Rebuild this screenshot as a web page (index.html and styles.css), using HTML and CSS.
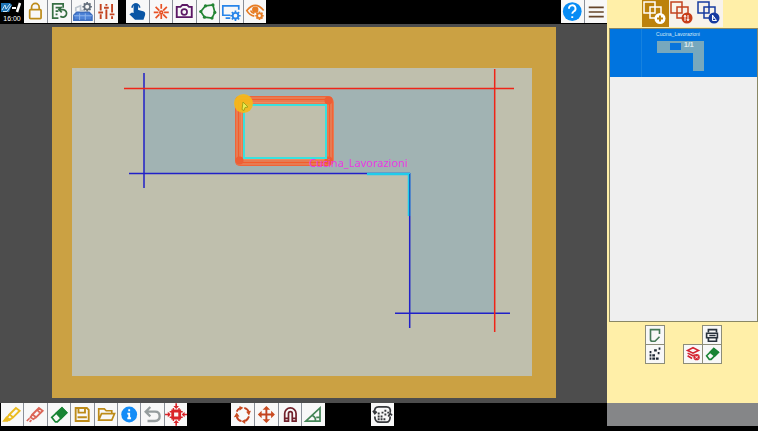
FILE: index.html
```html
<!DOCTYPE html>
<html lang="it">
<head>
<meta charset="utf-8">
<title>Cucina_Lavorazioni</title>
<link rel="stylesheet" href="styles.css">
</head>
<body>
<main class="workspace">
  <header class="toolbar toolbar-top">
    <div class="brand">
      <svg class="brand-logo" viewBox="0 0 22 11" aria-hidden="true"><path d="M1 1h9l2 2-3 7H1z" fill="#1f74b5"/><path d="M2 8 5 3l1 4 4-5M3 9.500h4l4-6" fill="none" stroke="#c6e2f4"/><path d="M12 6h4" stroke="#fff" stroke-width="2"/><path d="m17 10 3-9" stroke="#fff" stroke-width="2.500"/></svg>
      <time class="clock">16:00</time>
    </div>
    <div class="group cols-4">
      <button class="tool gold" aria-label="Lock"><svg viewBox="0 0 24 24"><rect x="6" y="10" width="12" height="9.500" rx="1"/><path d="M8 10V7.500a4 4 0 0 1 8 0V10"/></svg></button>
      <button class="tool green-dark" aria-label="Reload list"><svg viewBox="0 0 24 24"><path d="M11 19H5V4h11v4M8 8h5M8 11.500h3M8 15h2M12 10h4a4 4 0 1 1-3 7M14.500 7l-3 3 3 3"/></svg></button>
      <button class="tool" aria-label="Machine settings"><svg viewBox="0 0 24 24"><path d="m2 16 3-3h13l3 3v5H2z" fill="#4e83d8" stroke="#3e6fc0"/><path d="M2 16.500h19M8 14v7M14 14v7" stroke="#91b7ed" stroke-width="1"/><path d="M4 12V8l5-2v5h4" stroke="#bec6cf"/><circle cx="16" cy="7" r="3" stroke="#66717e"/><path d="M16 2v2m0 6v2M11 7h2m6 0h2M12.500 3.500l1.500 1.500m4 4 1.500 1.500m0-7L18 5m-4 4-1.500 1.500" stroke="#66717e"/></svg></button>
      <button class="tool rust" aria-label="Adjust"><svg viewBox="0 0 24 24"><path d="M6 4v7m0 4v5M12 4v2m0 4v10M18 4v9m0 4v3M3.500 13h5M9.500 8h5M15.500 15h5" stroke-width="2"/></svg></button>
    </div>
    <div class="group cols-6 after-brand">
      <button class="tool" aria-label="Select"><svg viewBox="0 0 24 24"><path d="M9 15V5.500a1.500 1.500 0 0 1 3 0V11l6 1.500q2 .5 1.500 3L18 20h-8l-5-5 1.500-1z" fill="#0a56a5" stroke="#0a56a5"/><path d="M6.500 8a4 4 0 1 1 8 0" stroke="#0a56a5"/></svg></button>
      <button class="tool orange-red" aria-label="Laser origin"><svg viewBox="0 0 24 24"><path d="M12 4v5m0 6v5M4 13h5m6 0h5M6 7l4 4m4 4 4 4m0-12-4 4m-4 4-4 4"/><circle cx="12" cy="13" r="1.500"/></svg></button>
      <button class="tool purple" aria-label="Camera"><svg viewBox="0 0 24 24"><path d="M4 7h4l2-2h5l2 2h3v11H4z" stroke-width="2"/><circle cx="12" cy="12.500" r="3"/></svg></button>
      <button class="tool green" aria-label="Polygon"><svg viewBox="0 0 24 24"><path d="m9 6 8-1 2 8-3 6-8-1-4-6z"/><g fill="#238533" stroke="none"><circle cx="9" cy="6" r="1.700"/><circle cx="17" cy="5" r="1.700"/><circle cx="19" cy="13" r="1.700"/><circle cx="16" cy="19" r="1.700"/><circle cx="8" cy="18" r="1.700"/><circle cx="4" cy="12" r="1.700"/></g></svg></button>
      <button class="tool blue" aria-label="Screen settings"><svg viewBox="0 0 24 24"><path d="M11 16H3V6h17v4M6 19h5"/><circle cx="16.500" cy="16.500" r="3" stroke-width="2"/><path d="M16.500 11v2m0 7v2M11 16.500h2m7 0h2M12.600 12.600l1.400 1.400m5 5 1.400 1.400m0-7.800L19 14m-5 5-1.400 1.400"/></svg></button>
      <button class="tool orange" aria-label="View settings"><svg viewBox="0 0 24 24"><path d="M11 17q-5-1-8-6 9-11 18 0M7 11a5 4.500 0 0 0 4 3"/><circle cx="12" cy="10" r="2.500" fill="#e77d25"/><circle cx="16.500" cy="16.500" r="2.500" stroke-width="2"/><path d="M16.500 12v2m0 5v2M12 16.500h2m5 0h2M13.300 13.300l1.200 1.200m4 4 1.200 1.200m0-6.400-1.200 1.200m-4 4-1.200 1.200"/></svg></button>
    </div>
    <div class="group cols-2 push">
      <button class="tool" aria-label="Help"><svg viewBox="0 0 24 24"><circle cx="12" cy="12" r="10" fill="#078cf5" stroke="none"/><path d="M8.500 9a3.500 3.500 0 1 1 5 3q-1.500 1-1.500 2.500M12 17v2" stroke="#fff" stroke-width="2"/></svg></button>
      <button class="tool" aria-label="Menu"><svg viewBox="0 0 24 24"><path d="M4 7.500h16M4 12.500h16M4 17.500h16" stroke="#65452a"/></svg></button>
    </div>
  </header>

  <svg class="canvas" viewBox="0 24 607 379" role="img" aria-label="Cucina_Lavorazioni">
    <rect x="52" y="27" width="504" height="371" fill="#cba143"/>
    <rect x="72" y="68" width="460" height="308" fill="#bfbfad"/>
    <path d="M144 88.500h351V313h-85V173.500H144z" fill="#a1b3b3"/>
    <rect x="240" y="101" width="89" height="60" fill="#c0bfac"/>
    <g fill="none">
      <rect x="239.500" y="100.500" width="90" height="61" rx="2" stroke="#e77b52" stroke-width="9"/>
      <rect x="235.500" y="96.500" width="97" height="69" rx="4" stroke="#f26337"/>
      <rect x="238.500" y="99.500" width="91" height="63" rx="2" stroke="#f45c2b"/>
      <rect x="241.500" y="102.500" width="85" height="57" stroke="#ef8860"/>
      <g fill="#ed5e35"><circle cx="328.500" cy="100.500" r="4"/><circle cx="328.500" cy="160.500" r="4"/><circle cx="239.500" cy="160.500" r="4"/></g>
      <rect x="244" y="105" width="82" height="53" stroke="#39e1df" stroke-width="2"/>
      <g stroke="#2020c8" stroke-width="1.500"><path d="M144 73v115M129 173.500h281M409.700 173v155M395 313.300h115"/></g>
      <path d="M367 174h42v42" stroke="#20ccec" stroke-width="2.500"/>
      <path d="M409.500 174v42" stroke="#1265bc"/>
      <path d="M124 88.500h390M494.700 69v263" stroke="#ef2418" stroke-width="1.500"/>
    </g>
    <circle cx="243.500" cy="103.500" r="9.500" fill="#f5ba19" fill-opacity=".92"/>
    <path d="m243 102 5 5-3 .5-1 3-2-1z" fill="#e7ef55" stroke="#a6a316"/>
    <text class="piece-name" x="309" y="167">Cucina_Lavorazioni</text>
  </svg>

  <footer class="toolbar toolbar-bottom">
    <div class="group cols-8">
      <button class="tool yellow" aria-label="Highlight"><svg viewBox="0 0 24 24"><path d="m9 12 7-7 4 3-7 7zM9 12l-3 4 3 2 4-3" stroke-width="2"/><path d="m6 15-3 4h4l2-2z" fill="#ebbb20"/></svg></button>
      <button class="tool coral" aria-label="Mark"><svg viewBox="0 0 24 24"><path d="m9 12 7-7 4 3-7 7zM9 12l-2 3 3 2 3-2" stroke-width="2"/><path d="m6 16-3 3m5-1-2 2M14 7l3 3"/></svg></button>
      <button class="tool eraser" aria-label="Erase"><svg viewBox="0 0 24 24"><path d="m4 15 11-10 5 5-10 10H8z"/><path d="m9 10.500 6-5.500 5 5-6 6z" fill="#198434"/></svg></button>
      <button class="tool gold" aria-label="Save"><svg viewBox="0 0 24 24"><path d="M5 5h12l2 2v12H5zM8 5v5h7V5M7 15h10" stroke-width="2"/></svg></button>
      <button class="tool gold" aria-label="Open"><svg viewBox="0 0 24 24"><path d="M4 18V6h6l2 2h6v3M4 18l3-7h14l-3 7z"/></svg></button>
      <button class="tool" aria-label="Information"><svg viewBox="0 0 24 24"><circle cx="12" cy="12" r="8.500" fill="#138cf7" stroke="none"/><path d="M12 6.500v2M10 11h2v5m-2 0h4" stroke="#fff" stroke-width="2"/></svg></button>
      <button class="tool" aria-label="Undo"><svg viewBox="0 0 24 24"><path d="M5 9h10q5 0 5 5t-5 5H7M10 4 5 9l5 5" stroke="#969d9e" stroke-width="2.500"/></svg></button>
      <button class="tool red" aria-label="Fit"><svg viewBox="0 0 24 24"><path d="M7.500 7.500h9v9h-9zM9 5v14m6-14v14M5 9h14M5 15h14" stroke-width="1.500"/><path d="m12 6-3-3h6zM12 18l-3 3h6zM6 12 3 9v6zM18 12l3-3v6z" fill="#da252a" stroke="none"/><path d="M12 0v5m0 14v5M0 12h5m14 0h5"/></svg></button>
    </div>
    <div class="group cols-4 transform-tools">
      <button class="tool rust" aria-label="Rotate"><svg viewBox="0 0 24 24"><path d="M6 9q1-3 4-4m4 0q4 1 5 5m0 4q-1 3-4 5m-4 0q-4-1-5-5" stroke-width="2"/><path d="m9 3 4 2-4 3zM21 8l-2 5-3-4zM15 22l-4-3 4-2zM3 15l3-5 3 4z" fill="#c94b20" stroke="none"/></svg></button>
      <button class="tool rust" aria-label="Move"><svg viewBox="0 0 24 24"><path d="M12 5v14M5 12h14" stroke-width="2"/><path d="m12 3-4 4h8zM12 21l-4-4h8zM3 12l4-4v8zM21 12l-4-4v8z" fill="#c94b20" stroke="none"/></svg></button>
      <button class="tool maroon" aria-label="Snap"><svg viewBox="0 0 24 24"><path d="M6 19v-8a6 6 0 0 1 12 0v8h-4v-8q0-2-2-2t-2 2v8zM6 16h4m4 0h4"/></svg></button>
      <button class="tool green-soft" aria-label="Angle"><svg viewBox="0 0 24 24"><path d="M4 19 19 5v14zM11 13q4 2 3 6m1-4h4"/></svg></button>
    </div>
    <div class="group cols-1 nesting">
      <button class="tool slate" aria-label="Nesting"><svg viewBox="0 0 24 24"><path d="M4 10q-1-6 4-6h8q5 0 4 6M4 14q0 6 5 6h7q4 0 4-6M2 8l2 3 2-2m12 5 2-3 2 2"/><path d="M7 11h2M7 14h2m1 0h2M7 17h2m1 0h2m1 0h2M11 10h2m1-2h2m-2 4h2m1-2h2" stroke-width="2"/></svg></button>
    </div>
  </footer>
</main>

<aside class="side">
  <nav class="modes">
    <button class="mode active" aria-label="Add piece"><svg viewBox="0 0 27 27"><path d="M2 2h11v11H2zM8 7h11v11H8z"/><circle cx="18" cy="18.500" r="5.500" fill="#fff" stroke="none"/><path d="M18 15.500v6M15 18.500h6" stroke="#bc820c" stroke-width="2"/></svg></button>
    <button class="mode rust" aria-label="Sort pieces"><svg viewBox="0 0 27 27"><path d="M2 2h11v11H2zM8 7h11v11H8z"/><circle cx="18" cy="18" r="5.500" fill="#c83d18" stroke="none"/><path d="M16 21v-5m-1 1 1-2 1 2m2-2v5m-1-1 1 2 1-2" stroke="#fff" stroke-width="1"/></svg></button>
    <button class="mode navy" aria-label="Measure pieces"><svg viewBox="0 0 27 27"><path d="M2 2h11v11H2zM8 7h11v11H8z"/><circle cx="18" cy="18" r="5.500" fill="#173ba0" stroke="none"/><path d="M16.500 15v5.500h4zM17 18h2" stroke="#fff" stroke-width="1"/></svg></button>
  </nav>
  <section class="pieces">
    <button class="piece">
      <span class="piece-mark"></span>
      <span class="piece-view">
        <span class="piece-title">Cucina_Lavorazioni</span>
        <svg class="piece-shape" viewBox="0 0 47 30"><path d="M0 0h47v30H36V12H0z" fill="#77a8bd"/><rect x="13" y="2" width="11" height="7" fill="#0874dc"/><text class="piece-count" x="27" y="6">1/1</text></svg>
      </span>
    </button>
  </section>
  <div class="actions">
    <div class="action-stack">
      <button class="action" aria-label="Edit sheet"><svg viewBox="0 0 20 20"><path d="M15 9V4H5v11q0 2 2 2h3l5-5" stroke="#467957"/></svg></button>
      <button class="action" aria-label="Arrange"><svg viewBox="0 0 20 20"><path d="M4 8h2M4 11.500h2m1 0h3M4 15h2m1 0h3m1 0h3M9 6h3m2-2h2m-3 5h2" stroke="#1e2835" stroke-width="2.500"/></svg></button>
    </div>
    <div class="action-stack right">
      <button class="action print" aria-label="Print"><svg viewBox="0 0 20 20"><path d="M6 7V4h9v3M4 8h12v5H4zM6 13v4h9v-4M7 10.500h7" stroke="#29323d"/></svg></button>
      <button class="action" aria-label="Remove layers"><svg viewBox="0 0 20 20"><path d="m4 6 6-3 6 3-6 3zM4 9l6 3 2-1M4 12l5 3" stroke="#d32531"/><circle cx="14" cy="13.500" r="3.500" fill="#d32531" stroke="none"/><path d="m12.500 12 3 3m0-3-3 3" stroke="#fff" stroke-width="1"/></svg></button>
      <button class="action eraser" aria-label="Erase piece"><svg viewBox="0 0 20 20"><path d="m4 12 8-8 5 4-8 8H7z"/><path d="m8 8 4-4 5 4-4 4z" fill="#198434"/></svg></button>
    </div>
  </div>
  <div class="side-foot"></div>
</aside>
</body>
</html>
```
FILE: styles.css
```css
* { box-sizing: border-box; }

body {
  margin: 0;
  min-height: 100vh;
  display: grid;
  grid-template-columns: minmax(0, 1fr) 151px;
  background: #000;
  font-family: "Liberation Sans", Arial, sans-serif;
}

button {
  margin: 0;
  padding: 0;
  border: 0;
  font: inherit;
  color: inherit;
}

svg { display: block; }

button svg {
  width: 100%;
  height: 100%;
  fill: none;
  stroke: currentColor;
  stroke-width: 1.8;
}

.workspace {
  display: flex;
  flex-direction: column;
  min-width: 0;
  background: #4d4d4d;
}

.toolbar {
  display: flex;
  align-items: flex-start;
  background: #000;
}

.toolbar-top { height: 24px; }

.toolbar-bottom {
  height: 28px;
  padding: 0 0 5px 1px;
}

.brand {
  width: 24px;
  padding-top: 2px;
  color: #fff;
  text-align: center;
}

.brand-logo {
  width: 22px;
  height: 11px;
}

.clock {
  display: block;
  font-size: 7px;
  line-height: 12px;
}

.group {
  display: grid;
  gap: 1px;
  background: #8a8f98;
}

.cols-1 { width: 23px; }
.cols-2 { width: 46px; grid-template-columns: repeat(2, 1fr); }
.cols-4 { width: 94px; grid-template-columns: repeat(4, 1fr); }
.cols-6 { width: 140px; grid-template-columns: repeat(6, 1fr); }
.cols-8 { width: 186px; grid-template-columns: repeat(8, 1fr); }

.after-brand { margin-left: 8px; }
.push { margin-left: auto; }
.transform-tools { margin-left: 44px; }
.nesting { margin-left: 46px; }

.tool {
  height: 23px;
  min-width: 0;
  background: #f8f8f8;
}

.gold { color: #bd8b18; }
.green-dark { color: #376f43; }
.rust { color: #c24320; }
.orange-red { color: #e85225; }
.purple { color: #5b1764; }
.green { color: #238533; }
.eraser { color: #198434; }
.blue { color: #2885e9; }
.orange { color: #e77d25; }
.yellow { color: #ebbb20; }
.coral { color: #dc6658; }
.red { color: #da252a; }
.maroon { color: #71212b; }
.green-soft { color: #438556; }
.slate { color: #37393c; }
.navy { color: #173ba0; }

.canvas {
  flex: 1;
  width: 100%;
  min-height: 0;
}

.piece-name {
  font-family: "Noto Sans", sans-serif;
  font-size: 11px;
  fill: #e83be2;
}

.side {
  display: flex;
  flex-direction: column;
  border-bottom: 5px solid #000;
  background: #ffefa8;
}

.modes {
  display: flex;
  justify-content: center;
}

.mode {
  width: 27px;
  height: 27px;
  background: #f8f3eb;
}

.mode svg { stroke-width: 1.5; }

.mode.active {
  background: #bc820c;
  color: #fff;
}

.pieces {
  height: 294px;
  margin: 1px 0 0 2px;
  border: 1px solid #8a8764;
  background: #efefef;
}

.piece {
  display: flex;
  width: 100%;
  height: 48px;
  background: #0074df;
  color: #d5e9f5;
}

.piece-mark {
  width: 32px;
  height: 48px;
  border-right: 1px solid #1682df;
}

.piece-view {
  width: 72px;
  height: 48px;
  padding-top: 2px;
}

.piece-title {
  display: block;
  font-size: 5px;
  line-height: 7px;
}

.piece .piece-shape {
  width: 47px;
  height: 30px;
  margin: 3px auto 0 15px;
  stroke: none;
}

.piece-count {
  font-size: 7px;
  font-weight: bold;
  fill: #e2eef2;
}

.actions {
  display: flex;
  align-items: flex-start;
  gap: 18px;
  flex: 1;
  padding: 3px 0 0 38px;
}

.action-stack {
  display: grid;
  gap: 1px;
  padding: 1px;
}

.right { grid-template-columns: 18px 18px; }

.action {
  width: 18px;
  height: 18px;
  background: #f8f8f8;
  outline: 1px solid #8d8d79;
}

.print { grid-column: 2; }

.side-foot {
  height: 23px;
  background: #858688;
}
```
